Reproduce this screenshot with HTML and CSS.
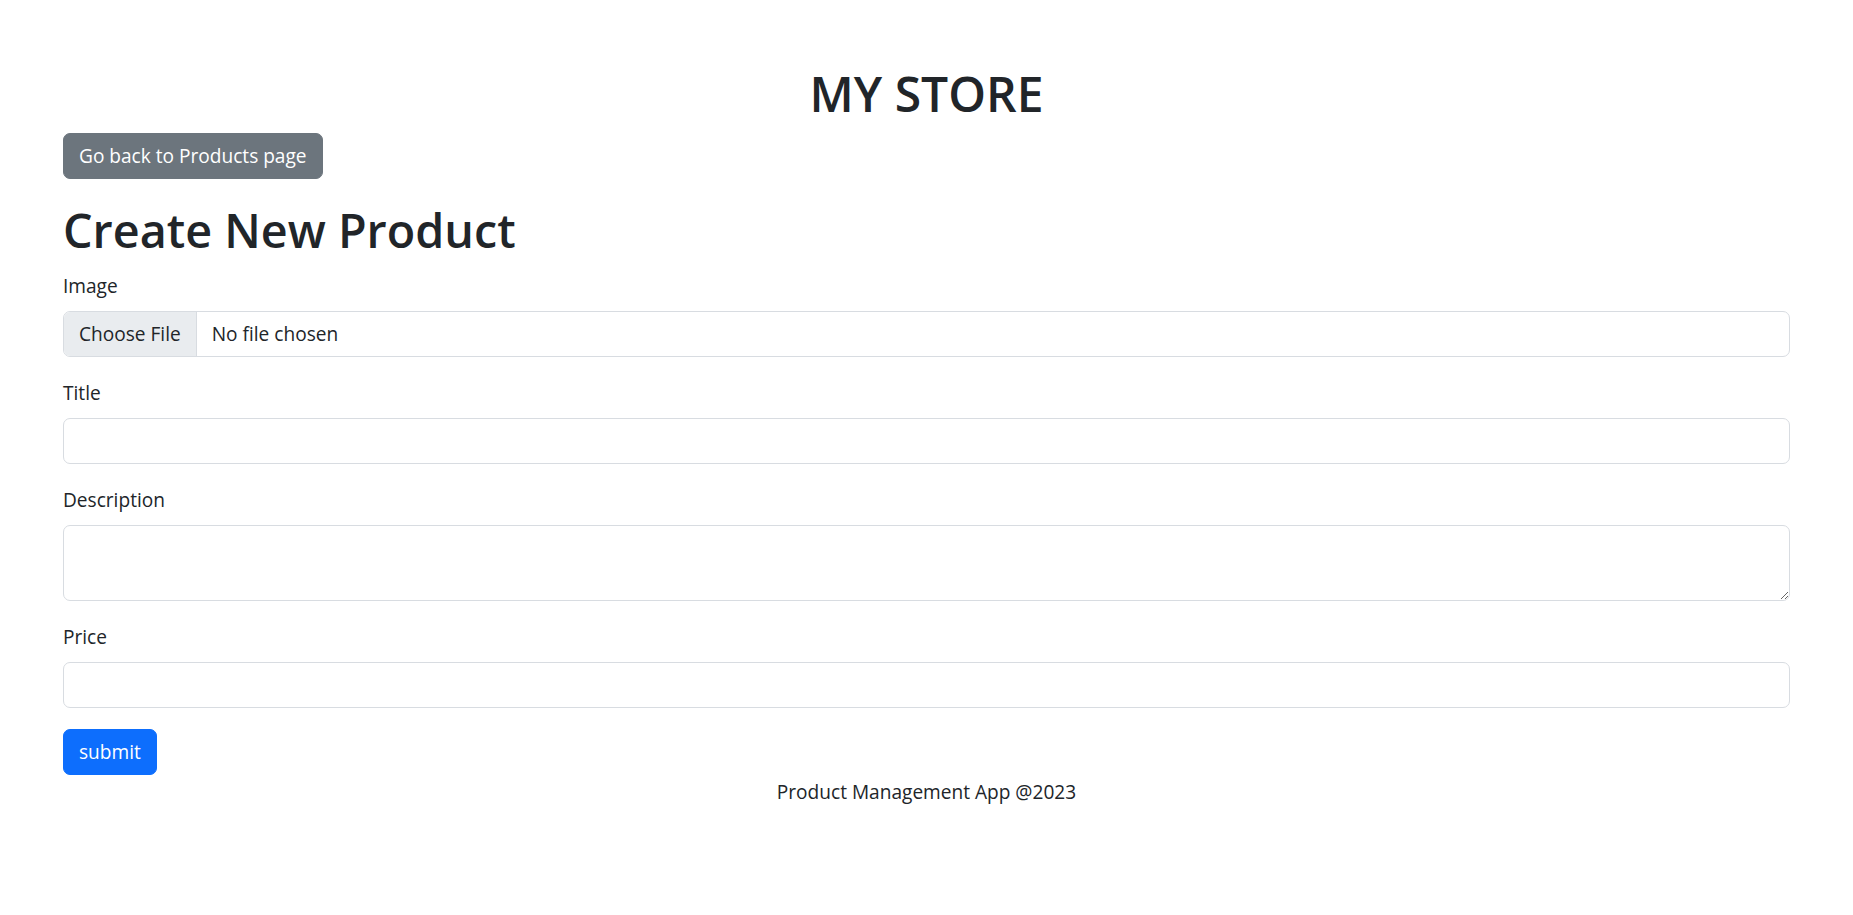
FILE: index.html
```html
<!DOCTYPE html>
<html lang="en">
<head>
<meta charset="utf-8">
<title>Create New Product</title>
<link rel="stylesheet" href="styles.css">
</head>
<body>
<div class="page">
  <header class="site-header">
    <h1 class="brand">MY STORE</h1>
  </header>
  <main class="content">
    <div class="toolbar">
      <a class="btn btn-secondary" href="#">Go back to Products page</a>
    </div>
    <h1 class="page-title">Create New Product</h1>
    <form class="product-form">
      <div class="field">
        <label class="field-label" for="image">Image</label>
        <div class="control file-control" id="image">
          <span class="file-button">Choose File</span>
          <span class="file-name">No file chosen</span>
        </div>
      </div>
      <div class="field">
        <label class="field-label" for="title">Title</label>
        <input class="control" type="text" id="title">
      </div>
      <div class="field">
        <label class="field-label" for="description">Description</label>
        <textarea class="control control-area" id="description"></textarea>
      </div>
      <div class="field">
        <label class="field-label" for="price">Price</label>
        <input class="control" type="text" id="price">
      </div>
      <div class="actions">
        <button class="btn btn-primary" type="submit">submit</button>
      </div>
    </form>
  </main>
  <footer class="site-footer">Product Management App @2023</footer>
</div>
</body>
</html>
```

FILE: styles.css
```css
* {
  box-sizing: border-box;
}

body {
  margin: 0;
  background: #ffffff;
}

.page {
  font-family: "Open Sans", "Noto Sans", sans-serif;
  font-size: 19.1px;
  line-height: 30px;
  color: #212529;
}

.site-header {
  padding-top: 65px;
  text-align: center;
}

.brand {
  margin: 0 0 9px;
  font-size: 48px;
  font-weight: 600;
  line-height: 58.8px;
}

.content {
  padding: 0 63px;
}

.toolbar {
  display: flex;
}

.btn {
  display: inline-flex;
  align-items: center;
  height: 46px;
  padding: 7px 15px;
  border: 1px solid transparent;
  border-radius: 7px;
  font-family: inherit;
  font-size: 19.1px;
  line-height: 30px;
  text-decoration: none;
  cursor: pointer;
}

.btn-secondary {
  background: #6c757d;
  border-color: #6c757d;
  color: #ffffff;
}

.btn-primary {
  background: #0d6efd;
  border-color: #0d6efd;
  color: #ffffff;
}

.page-title {
  margin: 23px 0 12px;
  font-size: 46.7px;
  font-weight: 600;
  line-height: 57.6px;
}

.product-form {
  margin: 0;
}

.field {
  margin-bottom: 21px;
}

.field-label {
  display: block;
  margin-bottom: 10px;
}

.control {
  display: block;
  width: 100%;
  height: 46px;
  margin: 0;
  padding: 7px 15px;
  border: 1px solid #d8dce1;
  border-radius: 7px;
  background: #ffffff;
  color: #212529;
  font-family: inherit;
  font-size: 19.1px;
  line-height: 30px;
  outline: none;
}

.control-area {
  height: 76px;
  resize: vertical;
}

.file-control {
  display: flex;
  align-items: stretch;
  padding: 0;
  overflow: hidden;
}

.file-button {
  display: flex;
  align-items: center;
  padding: 0 15px;
  background: #e9ecef;
  border-right: 1px solid #d8dce1;
}

.file-name {
  display: flex;
  align-items: center;
  padding-left: 15px;
}

.actions {
  display: flex;
}

.site-footer {
  margin-top: 2px;
  text-align: center;
}
```
